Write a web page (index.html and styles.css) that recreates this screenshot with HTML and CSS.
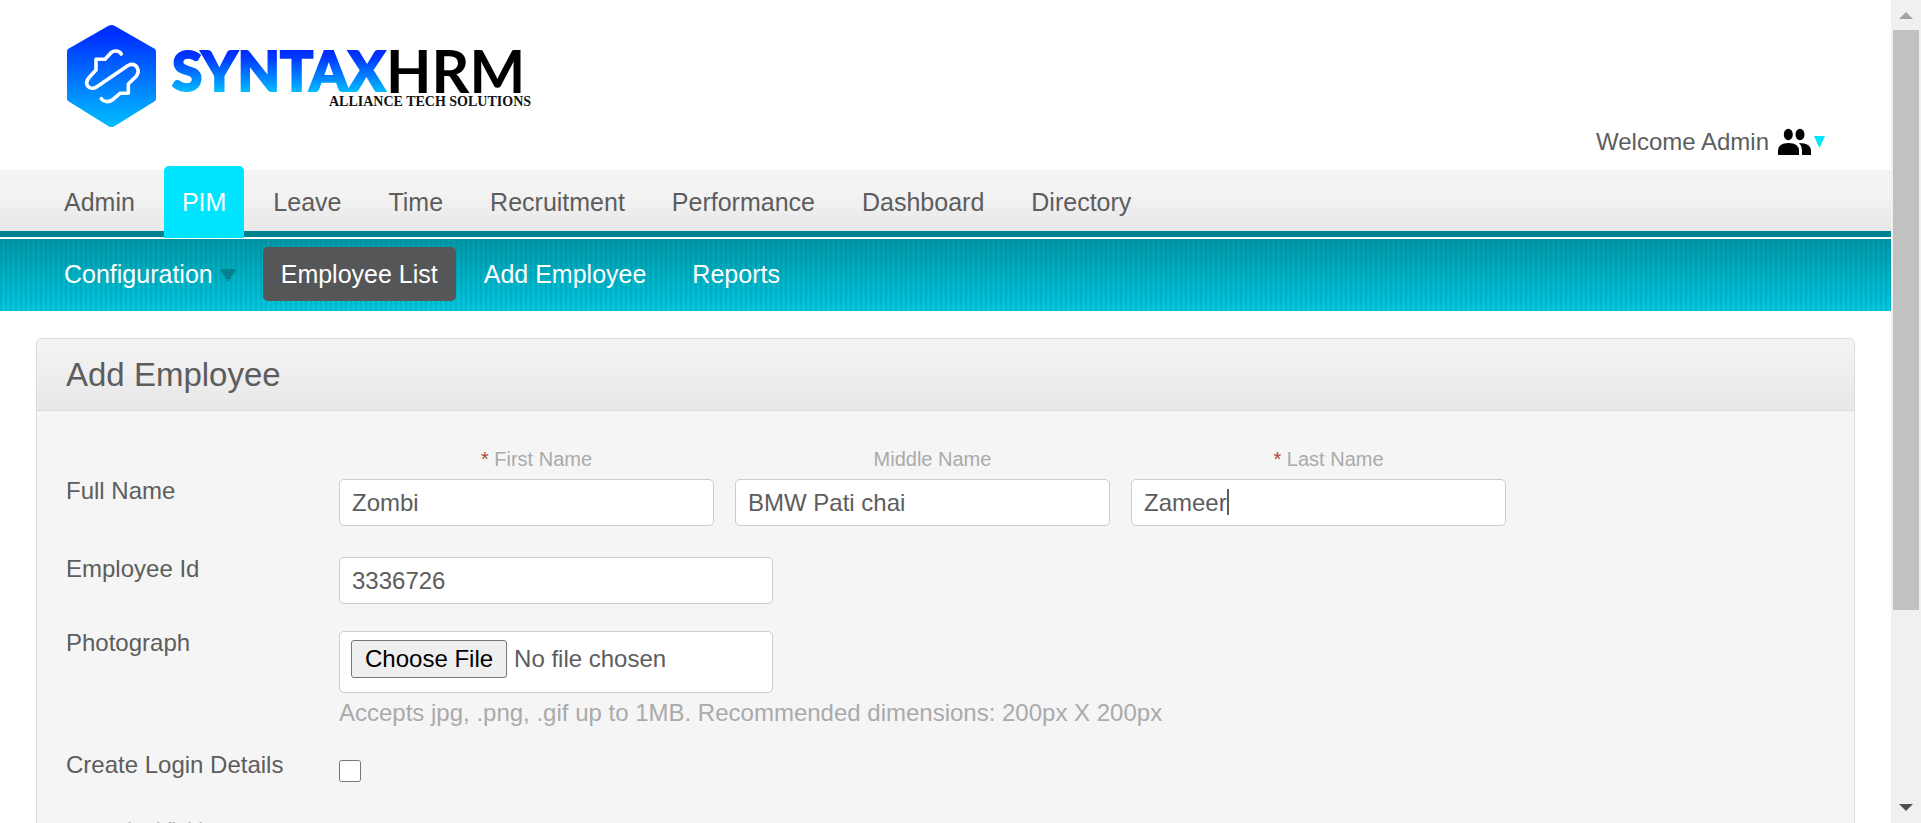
FILE: index.html
```html
<!DOCTYPE html>
<html lang="en">
<head>
<meta charset="utf-8">
<title>Add Employee - SyntaxHRM</title>
<link rel="stylesheet" href="styles.css">
</head>
<body>
<div class="page">
  <header class="header">
    <a class="logo" href="#" aria-label="SyntaxHRM home">
      <svg width="480" height="110" viewBox="0 0 480 110">
        <defs>
          <linearGradient id="mark" x1="0" y1="0" x2="0" y2="1"><stop offset=".1" stop-color="#0030ff"/><stop offset="1" stop-color="#00bfff"/></linearGradient>
          <linearGradient id="word" gradientUnits="userSpaceOnUse" x1="0" y1="28" x2="0" y2="72"><stop offset="0" stop-color="#0028ff"/><stop offset=".2" stop-color="#0038ff"/><stop offset="1" stop-color="#00c0ff"/></linearGradient>
        </defs>
        <path d="M42 4.500q2.700-1.200 5 0L88 28q1 1 1 3v46q0 2-1 3L47 105.500q-2.500 1.200-5 0L1 80q-1-1-1-3V31q0-2 1-3z" fill="url(#mark)"/>
        <path d="M54.300 33c-2-3.500-7-4-10-1.500L38 38.300h-9V49l-6.500 7c-7 8 1 14 7 10L61 44.500c8-4 13 5 8 11l-7.700 7.500v9.300H53l-7.500 6.500c-4 3-9 2-11.200-1.100" fill="none" stroke="#fff" stroke-width="3.600" stroke-linejoin="round" stroke-linecap="round"/>
        <text class="logo-syntax" x="105" y="70" fill="url(#word)" stroke="url(#word)" stroke-width="2">SYNTAX</text>
        <text class="logo-hrm" x="319" y="72">HRM</text>
        <text class="logo-tag" x="262" y="85">ALLIANCE TECH SOLUTIONS</text>
      </svg>
    </a>
    <button class="welcome" type="button">
      <span>Welcome Admin</span>
      <svg width="48" height="28" viewBox="0 0 48 28">
        <ellipse cx="11.300" cy="6.500" rx="4.500" ry="5.800"/><ellipse cx="23" cy="6.500" rx="4.500" ry="5.800"/>
        <path d="M1 27v-4q0-8 10.500-8T22 23v4zM22 15q12 0 12 8v4h-9v-5q0-4-3-7z"/>
        <path d="M37 8h11l-5.500 12z" fill="#00e5ff"/>
      </svg>
    </button>
  </header>
  <nav class="menu" aria-label="Main">
    <a class="item" href="#">Admin</a>
    <a class="item item-active" href="#">PIM</a>
    <a class="item" href="#">Leave</a>
    <a class="item" href="#">Time</a>
    <a class="item" href="#">Recruitment</a>
    <a class="item" href="#">Performance</a>
    <a class="item" href="#">Dashboard</a>
    <a class="item" href="#">Directory</a>
  </nav>
  <nav class="submenu" aria-label="PIM">
    <a class="item" href="#">Configuration<svg class="arrow" width="14" height="12" viewBox="0 0 14 12"><path d="M0 0h14v4h-2v3h-2v3H8v2H6v-2H4V7H2V4H0z" fill="#00838f"/></svg></a>
    <a class="item item-current" href="#">Employee List</a>
    <a class="item" href="#">Add Employee</a>
    <a class="item" href="#">Reports</a>
  </nav>
  <main class="card">
    <h1 class="card-title">Add Employee</h1>
    <form class="form">
      <div class="row row-name">
        <span class="label" id="full-name">Full Name</span>
        <div class="names" role="group" aria-labelledby="full-name">
          <div class="name"><label class="caption" for="first"><span class="star">*</span> First Name</label><input class="text" id="first" type="text" value="Zombi"></div>
          <div class="name"><label class="caption" for="middle">Middle Name</label><input class="text" id="middle" type="text" value="BMW Pati chai"></div>
          <div class="name"><label class="caption" for="last"><span class="star">*</span> Last Name</label><input class="text" id="last" type="text" value="Zameer"><span class="caret"></span></div>
        </div>
      </div>
      <div class="row">
        <label class="label" for="empid">Employee Id</label>
        <input class="text text-half" id="empid" type="text" value="3336726">
      </div>
      <div class="row">
        <label class="label" for="photo">Photograph</label>
        <div class="field">
          <input class="file" id="photo" type="file">
          <p class="hint">Accepts jpg, .png, .gif up to 1MB. Recommended dimensions: 200px X 200px</p>
        </div>
      </div>
      <div class="row">
        <label class="label" for="login">Create Login Details</label>
        <input class="check" id="login" type="checkbox">
      </div>
      <p class="required"><span class="star">*</span> Required field</p>
    </form>
  </main>
</div>
<div class="scrollbar" aria-hidden="true">
  <svg width="14" height="7" viewBox="0 0 14 7"><path d="M0 7h14L7 0z" fill="#a3a3a3"/></svg>
  <div class="track"><div class="thumb"></div></div>
  <svg width="14" height="7" viewBox="0 0 14 7"><path d="M0 0h14L7 7z" fill="#505050"/></svg>
</div>
</body>
</html>
```
FILE: styles.css
```css
* { box-sizing: border-box; }
body {
  margin: 0;
  height: 100vh;
  display: grid;
  grid-template-columns: 1fr 30px;
  overflow: hidden;
  background: #fff;
  color: #5d5d5d;
  font: 24px/26px "Liberation Sans", Arial, sans-serif;
}
h1, p { margin: 0; font-weight: normal; }
a { color: inherit; text-decoration: none; }
input, button { font: inherit; color: inherit; }
.page { overflow: auto; scrollbar-width: none; }

.header {
  height: 170px;
  padding: 21px 66px 14px 67px;
  display: flex;
  justify-content: space-between;
}
.logo svg { display: block; }
.logo-syntax { font: 900 55px Lato, sans-serif; }
.logo-hrm { font: 700 59px Lato, sans-serif; fill: #000; }
.logo-tag { font: 700 14px "Liberation Serif", serif; fill: #111; }
.welcome {
  align-self: flex-end;
  display: flex;
  align-items: center;
  gap: 8px;
  padding: 0;
  border: 0;
  background: none;
}

.menu, .submenu { display: flex; padding: 0 46px; font-size: 25px; }
.menu {
  height: 67px;
  gap: 11px;
  border-bottom: 6px solid #00838f;
  background: linear-gradient(#f3f3f3 40%, #e7e7e7);
}
.item { padding: 0 18px; white-space: nowrap; line-height: 65px; }
.item-active {
  height: 72px;
  margin-top: -4px;
  border-radius: 5px 5px 0 0;
  background: #00e5ff;
  color: #fff;
  line-height: 73px;
}
.submenu {
  height: 72px;
  gap: 10px;
  margin-top: 2px;
  align-items: center;
  padding-bottom: 3px;
  color: #fff;
  background:
    repeating-linear-gradient(90deg, rgba(0, 80, 95, .13) 0 2px, transparent 2px 5px),
    linear-gradient(#0097a7, #00c8e0);
}
.submenu .item { line-height: 54px; }
.item-current { border-radius: 5px; background: #555658; }
.arrow { margin-left: 8px; vertical-align: 2px; }

.card {
  margin: 27px 36px 40px;
  border: 1px solid #dcdcdc;
  border-radius: 5px;
  background: #f5f5f5;
}
.card-title {
  padding: 18px 29px 17px;
  border-bottom: 1px solid #dcdcdc;
  border-radius: 4px 4px 0 0;
  background: linear-gradient(#f4f4f4, #e8e8e8);
  font-size: 33px;
  line-height: 36px;
}
.form { padding: 35px 29px 30px; }
.row { display: grid; grid-template-columns: 273px minmax(0, 1fr); align-items: start; margin-bottom: 27px; }
.row-name { margin-bottom: 31px; }
.row-name .label { margin-top: 33px; }
.label { line-height: 24px; }
.names { display: grid; grid-template-columns: repeat(3, minmax(0, 375px)); gap: 21px; }
.name { position: relative; }
.caption { display: block; margin-bottom: 6px; padding-left: 20px; text-align: center; color: #aaa; font-size: 20px; line-height: 27px; }
.star { color: #aa4935; }
.text, .file { border: 1px solid #ccc; border-radius: 5px; background: #fff; }
.text { display: block; width: 100%; height: 47px; padding: 0 12px; }
.text-half, .file { max-width: 434px; }
.caret { position: absolute; left: 96px; bottom: 11px; width: 2px; height: 26px; background: #5d5d5d; }
.file { display: block; width: 100%; height: 62px; padding: 8px 11px; }
.file::file-selector-button {
  height: 38px;
  margin: 0 7px 0 0;
  padding: 0 13px;
  border: 1px solid #767676;
  border-radius: 3px;
  background: #efefef;
  color: #000;
  font: inherit;
}
.hint { margin-top: 7px; color: #aaa; }
.check { width: 22px; height: 22px; margin: 7px 0 0; }
.required { margin-top: 35px; color: #aaa; font-size: 20px; }

.scrollbar {
  display: flex;
  flex-direction: column;
  align-items: center;
  padding: 12px 2px;
  gap: 11px;
  background: #f0f0f0;
}
.scrollbar svg { flex: none; }
.track { flex: 1; width: 100%; }
.thumb { height: 76%; background: #c1c1c1; }
```
